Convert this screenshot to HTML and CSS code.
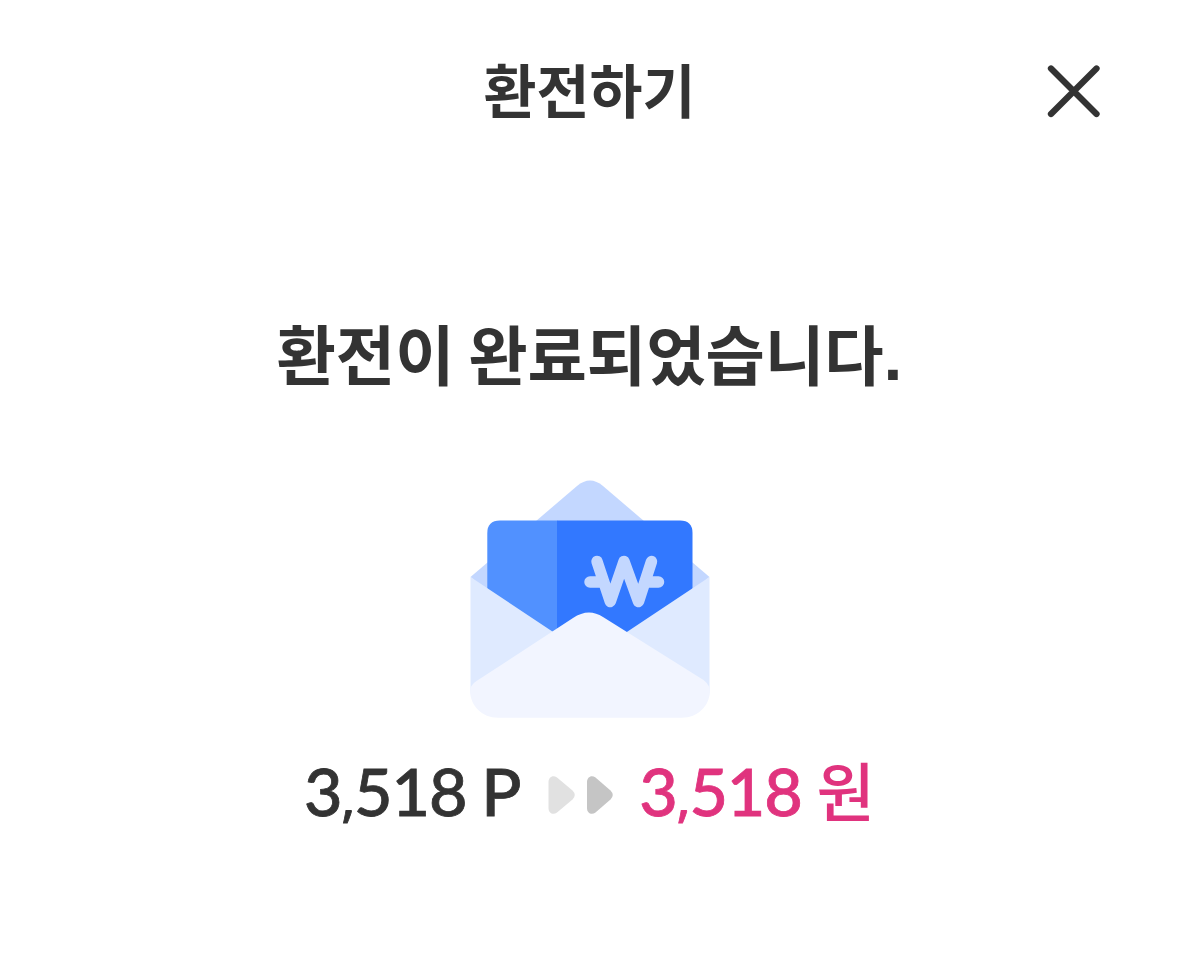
FILE: index.html
```html
<!DOCTYPE html>
<html lang="ko">
<head>
<meta charset="utf-8">
<title>환전하기</title>
<link rel="stylesheet" href="styles.css">
</head>
<body>
<header class="topbar">
  <h1 class="topbar-title">환전하기</h1>
  <button class="close" aria-label="닫기">
    <svg width="54" height="54" viewBox="0 0 54 54"><path d="M4 3.500L49.500 49M49.500 3.500L4 49" fill="none" stroke="#333" stroke-width="6.300" stroke-linecap="round"/></svg>
  </button>
</header>
<main class="content">
  <h2 class="message">환전이 완료되었습니다<span class="period">.</span></h2>
  <svg class="envelope" width="240" height="238" viewBox="470 480 240 238">
    <path d="M470.500 577L577 486Q590 475 603 486L709.500 577L590 680Z" fill="#c3d7ff"/>
    <path d="M487.300 640V533Q487.300 520.500 500 520.500H557.300V640Z" fill="#5191ff"/>
    <path d="M557 520.500H680Q692.500 520.500 692.500 533V640H557Z" fill="#3278ff"/>
    <path d="M597 561.500L610.300 601.500L624 561.500L638.500 601.500L651.500 561.500M590 582H603M645 582H658.500" fill="none" stroke="#c3d7ff" stroke-width="11.500" stroke-linecap="round" stroke-linejoin="round"/>
    <path d="M470.500 577L590 656.500L709.500 577V692H470.500Z" fill="#dfeaff"/>
    <path d="M476.500 681L573 618Q588.500 607.500 603 617L703.500 680Q710 685 710 692C709 706 698 717.700 682 717.700H498C482 717.700 471 706 470 692Q470 685 476.500 681Z" fill="#f2f5ff"/>
  </svg>
  <div class="exchange">
    <span class="points">3<span class="comma">,</span>518 P</span>
    <svg class="arrows" width="66" height="38" viewBox="548 776 66 38"><path d="M548.500 782C548.500 777 553 774.500 557 777.500L572.500 790.500Q577 795 572.500 799.500L557 812.500C553 815.500 548.500 813 548.500 808Z" fill="#e1e1e1"/><path d="M587 782C587 777 591.500 774.500 595.500 777.500L610.500 790.500Q615 795 610.500 799.500L595.500 812.500C591.500 815.500 587 813 587 808Z" fill="#c5c5c5"/></svg>
    <span class="won">3<span class="comma">,</span>518 <span class="unit">원</span></span>
  </div>
</main>
</body>
</html>
```
FILE: styles.css
```css
* { box-sizing: border-box; }
body { margin: 0; background: #fff; color: #333; font-family: Lato, "Noto Sans CJK KR", sans-serif; }
.topbar { height: 183px; padding: 0 78px; display: grid; grid-template-columns: 54px 1fr 54px; align-items: center; }
.topbar-title { grid-column: 2; margin: -2px 0 0; text-align: center; font-size: 57.600px; line-height: 80px; font-weight: 700; }
.close { border: 0; padding: 0; background: none; height: 54px; }
.close svg { display: block; }
.content { display: flex; flex-direction: column; align-items: center; padding-top: 127px; }
.message { margin: 0; font-size: 64.500px; line-height: 90px; font-weight: 700; word-spacing: -2px; white-space: nowrap; }
.period { font-family: "Liberation Sans", sans-serif; font-size: 68px; line-height: 1; }
.envelope { margin-top: 80px; }
.exchange { margin-top: 26px; display: flex; align-items: center; height: 92px; font-size: 66.500px; line-height: 92px; font-weight: 500; letter-spacing: -1.100px; word-spacing: -1px; white-space: nowrap; }
.points, .won { -webkit-text-stroke: 0.800px currentColor; }
.comma { font-family: "Noto Sans", sans-serif; font-size: 50px; line-height: 1; }
.unit { font-size: 63.500px; line-height: 1; letter-spacing: 0; -webkit-text-stroke: 0; }
.arrows { margin: 9px 25px 0 28px; }
.won { color: #e0337e; }
```
